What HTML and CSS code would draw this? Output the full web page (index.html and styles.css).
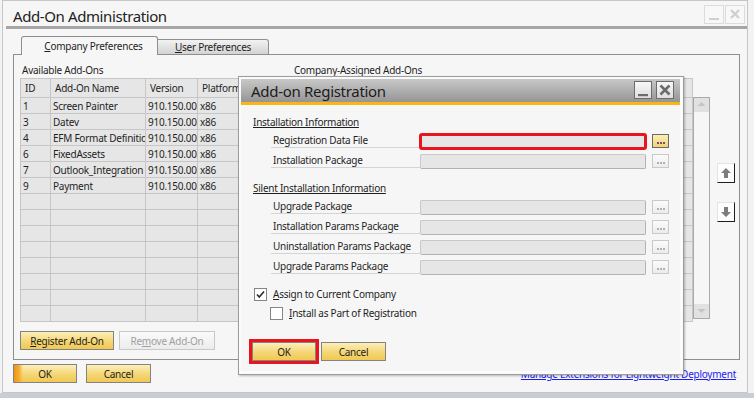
FILE: index.html
```html
<!DOCTYPE html>
<html>
<head>
<title>Add-On Administration</title>
<meta charset="UTF-8">
<link rel="stylesheet" href="styles.css">
</head>
<body>

<div class="win">
  <div class="titlebar">
    <span class="title">Add-On Administration</span>
    <span class="wbtns">
      <span class="wbtn"><svg width="18" height="17" viewBox="0 0 18 17"><rect x="4" y="12" width="10" height="2" fill="#cfcfcf"/></svg></span>
      <span class="wbtn"><svg width="18" height="17" viewBox="0 0 18 17"><path d="M5 4 L13 12 M13 4 L5 12" stroke="#cfcfcf" stroke-width="2.4"/></svg></span>
    </span>
  </div>

  <div class="content">
    <div class="tabs">
      <div class="tab active"><u>C</u>ompany Preferences</div>
      <div class="tab"><u>U</u>ser Preferences</div>
    </div>

    <div class="panel">
      <div class="lists">
        <div class="list avail">
          <div class="caption">Available Add-Ons</div>
          <table class="grid">
            <colgroup><col style="width:30px"><col style="width:95px"><col style="width:52px"><col></colgroup>
            <thead><tr><th>ID</th><th>Add-On Name</th><th>Version</th><th>Platform</th></tr></thead>
            <tbody>
              <tr><td>1</td><td>Screen Painter</td><td>910.150.00.</td><td>x86</td></tr>
              <tr><td>3</td><td>Datev</td><td>910.150.00.</td><td>x86</td></tr>
              <tr><td>4</td><td>EFM Format Definition</td><td>910.150.00.</td><td>x86</td></tr>
              <tr><td>6</td><td>FixedAssets</td><td>910.150.00.</td><td>x86</td></tr>
              <tr><td>7</td><td>Outlook_Integration</td><td>910.150.00.</td><td>x86</td></tr>
              <tr><td>9</td><td>Payment</td><td>910.150.00.</td><td>x86</td></tr>
              <tr><td></td><td></td><td></td><td></td></tr>
              <tr><td></td><td></td><td></td><td></td></tr>
              <tr><td></td><td></td><td></td><td></td></tr>
              <tr><td></td><td></td><td></td><td></td></tr>
              <tr><td></td><td></td><td></td><td></td></tr>
              <tr><td></td><td></td><td></td><td></td></tr>
              <tr><td></td><td></td><td></td><td></td></tr>
              <tr><td></td><td></td><td></td><td></td></tr>
            </tbody>
          </table>
        </div>

        <div class="list assigned">
          <div class="caption">Company-Assigned Add-Ons</div>
          <div class="gridbox">
            <table class="grid">
              <colgroup><col style="width:30px"><col style="width:150px"><col style="width:90px"><col style="width:60px"><col style="width:61px"><col style="width:9px"></colgroup>
              <thead><tr><th></th><th></th><th></th><th></th><th></th><th></th></tr></thead>
              <tbody>
                <tr><td></td><td></td><td></td><td></td><td></td><td></td></tr>
                <tr><td></td><td></td><td></td><td></td><td></td><td></td></tr>
                <tr><td></td><td></td><td></td><td></td><td></td><td></td></tr>
                <tr><td></td><td></td><td></td><td></td><td></td><td></td></tr>
                <tr><td></td><td></td><td></td><td></td><td></td><td></td></tr>
                <tr><td></td><td></td><td></td><td></td><td></td><td></td></tr>
                <tr><td></td><td></td><td></td><td></td><td></td><td></td></tr>
                <tr><td></td><td></td><td></td><td></td><td></td><td></td></tr>
                <tr><td></td><td></td><td></td><td></td><td></td><td></td></tr>
                <tr><td></td><td></td><td></td><td></td><td></td><td></td></tr>
                <tr><td></td><td></td><td></td><td></td><td></td><td></td></tr>
                <tr><td></td><td></td><td></td><td></td><td></td><td></td></tr>
                <tr><td></td><td></td><td></td><td></td><td></td><td></td></tr>
                <tr><td></td><td></td><td></td><td></td><td></td><td></td></tr>
              </tbody>
            </table>
            <div class="scrollcol">
              <div class="vscroll">
                <span class="sarrow"><svg width="15" height="13" viewBox="0 0 15 13"><path d="M3.5 8 L7.5 4 L11.5 8 Z" fill="#c4c4c4"/></svg></span>
                <span class="sarrow"><svg width="15" height="13" viewBox="0 0 15 13"><path d="M3.5 5 L7.5 9 L11.5 5 Z" fill="#c4c4c4"/></svg></span>
              </div>
            </div>
          </div>
        </div>

        <div class="movers">
          <button class="mover"><svg width="12" height="12" viewBox="0 0 12 12"><path d="M6 1 L11 6 L8 6 L8 11 L4 11 L4 6 L1 6 Z" fill="#7c7c7c"/></svg></button>
          <button class="mover"><svg width="12" height="12" viewBox="0 0 12 12"><path d="M6 11 L11 6 L8 6 L8 1 L4 1 L4 6 L1 6 Z" fill="#7c7c7c"/></svg></button>
        </div>
      </div>

      <div class="panel-btns">
        <button class="btn register"><u>R</u>egister Add-On</button>
        <button class="btn off remove">Re<u>m</u>ove Add-On</button>
      </div>
    </div>

    <div class="footer">
      <button class="btn focused">OK</button>
      <button class="btn cancel">Cancel</button>
      <a class="link" href="#">Manage Extensions for Lightweight Deployment</a>
    </div>
  </div>
</div>

<div class="dialog">
  <div class="dlg-title">
    <span class="dlg-caption">Add-on Registration</span>
    <span class="dlg-btns">
      <span class="dbtn"><svg width="16" height="16" viewBox="0 0 16 16"><rect x="3" y="12" width="10" height="2.2" fill="#6c6c6c"/></svg></span>
      <span class="dbtn"><svg width="16" height="16" viewBox="0 0 16 16"><path d="M3.5 3.5 L12.5 12.5 M12.5 3.5 L3.5 12.5" stroke="#6c6c6c" stroke-width="2.6"/></svg></span>
    </span>
  </div>

  <div class="dlg-body">
    <div class="section">Installation Information</div>
    <div class="row">
      <span class="label">Registration Data File</span>
      <span class="field marked"></span>
      <span class="browse hot"><i></i></span>
    </div>
    <div class="row">
      <span class="label">Installation Package</span>
      <span class="field"></span>
      <span class="browse"><i></i></span>
    </div>

    <div class="section silent">Silent Installation Information</div>
    <div class="row">
      <span class="label">Upgrade Package</span>
      <span class="field"></span>
      <span class="browse"><i></i></span>
    </div>
    <div class="row">
      <span class="label">Installation Params Package</span>
      <span class="field"></span>
      <span class="browse"><i></i></span>
    </div>
    <div class="row">
      <span class="label">Uninstallation Params Package</span>
      <span class="field"></span>
      <span class="browse"><i></i></span>
    </div>
    <div class="row">
      <span class="label">Upgrade Params Package</span>
      <span class="field"></span>
      <span class="browse"><i></i></span>
    </div>

    <div class="check first">
      <span class="box"><svg width="11" height="11" viewBox="0 0 11 11"><path d="M2 5.5 L4.3 8 L9 2.5" fill="none" stroke="#2a2a2a" stroke-width="1.6"/></svg></span>
      <span><u>A</u>ssign to Current Company</span>
    </div>
    <div class="check second">
      <span class="box"></span>
      <span><u>I</u>nstall as Part of Registration</span>
    </div>

    <div class="dlg-actions">
      <button class="btn marked-btn">OK</button>
      <button class="btn cancel">Cancel</button>
    </div>
  </div>
</div>

</body>
</html>
```

FILE: styles.css
```css
* {
  box-sizing: border-box;
}
html, body {
  margin: 0;
}
body {
  width: 754px;
  height: 398px;
  overflow: hidden;
  position: relative;
  background: linear-gradient(#f3f3f3 393px, #c9cdd6 393px);
  font-family: "Noto Sans", "Open Sans", sans-serif;
  font-size: 10px;
  letter-spacing: -0.25px;
  color: #1e1e1e;
}
u {
  text-decoration: underline;
  text-underline-offset: 1px;
}

/* main window */
.win {
  margin-left: 2px;
  width: 746px;
  height: 393px;
  background: #f6f6f6;
  border: 1px solid #c6c6c6;
  display: flex;
  flex-direction: column;
}
.titlebar {
  height: 28px;
  margin-left: 3px;
  border-bottom: 3px solid #a6a6a6;
  display: flex;
  align-items: flex-start;
  padding-left: 7px;
}
.title {
  font-size: 15px;
  letter-spacing: -0.4px;
  line-height: 20px;
  margin-top: 5px;
  color: #222;
}
.wbtns {
  margin-left: auto;
  margin-top: 4px;
  margin-right: 2px;
  display: flex;
  gap: 1px;
}
.wbtn {
  width: 20px;
  height: 19px;
  border: 1px solid #dcdcdc;
  background: #f8f8f8;
  display: flex;
}

.content {
  padding: 7px 7px 0 10px;
}

/* tabs */
.tabs {
  display: flex;
  align-items: flex-end;
  margin-left: 8px;
  height: 19px;
  margin-bottom: -1px;
  position: relative;
}
.tab {
  height: 16px;
  width: 111px;
  border: 1px solid #8e8e8e;
  border-left: 0;
  border-radius: 0 3px 0 0;
  background: linear-gradient(#f2f2f2, #d3d3d3);
  text-align: center;
  line-height: 14px;
}
.tab.active {
  height: 19px;
  width: 137px;
  border-left: 1px solid #8e8e8e;
  border-bottom: 0;
  border-radius: 3px 3px 0 0;
  background: #f6f6f6;
  line-height: 18px;
  padding-left: 8px;
}

.panel {
  height: 306px;
  border: 1px solid #8e8e8e;
  background: #f6f6f6;
}
.lists {
  display: flex;
  padding: 8px 0 0 6px;
}
.caption {
  height: 15px;
  line-height: 15px;
  padding-left: 2px;
}
.avail {
  width: 266px;
}
.assigned {
  margin-left: 6px;
}

/* grids */
.grid {
  border-collapse: separate;
  border-spacing: 0;
  table-layout: fixed;
  border-top: 1px solid #c6c6c6;
  border-left: 1px solid #c6c6c6;
  background: #e6e6e6;
}
.avail .grid {
  width: 266px;
}
.assigned .grid {
  width: 401px;
}
.grid th, .grid td {
  border-right: 1px solid #c6c6c6;
  border-bottom: 1px solid #c6c6c6;
  padding: 0 0 0 2px;
  overflow: hidden;
  white-space: nowrap;
  text-align: left;
  font-weight: normal;
}
.grid th {
  padding-left: 4px;
}
.grid thead tr {
  height: 19px;
}
.grid tbody tr {
  height: 16px;
}
.gridbox {
  display: flex;
}
.scrollcol {
  padding-top: 19px;
}
.vscroll {
  width: 17px;
  height: 222px;
  border: 1px solid #a9a9a9;
  background: #f6f6f6;
  display: flex;
  flex-direction: column;
  justify-content: space-between;
}
.sarrow {
  display: flex;
  height: 14px;
  background: #e1e1e1;
}

.movers {
  margin-left: 7px;
  padding-top: 100px;
  display: flex;
  flex-direction: column;
  gap: 19px;
}
.mover {
  width: 18px;
  height: 20px;
  padding: 0;
  background: #fdfdfd;
  border: 1px solid;
  border-color: #e4e4e4 #1e1e1e #1e1e1e #e4e4e4;
  display: flex;
  align-items: center;
  justify-content: center;
}

/* buttons */
.btn {
  height: 19px;
  width: 64px;
  padding: 0;
  font: inherit;
  letter-spacing: inherit;
  color: #1e1e1e;
  border: 1px solid #838383;
  background: linear-gradient(#fcefbc, #f5d675 55%, #f0c952);
}
.btn.cancel {
  width: 65px;
}
.btn.focused {
  background: linear-gradient(90deg, #ee9512, #f4ad33 5px, rgba(244, 200, 90, 0) 9px),
              linear-gradient(#fcefbc, #f5d675 55%, #f0c952);
}
.btn.off {
  color: #a0a0a0;
  border-color: #c8c8c8;
  background: linear-gradient(#fafafa, #ececec);
}
.panel-btns {
  display: flex;
  gap: 5px;
  padding: 9px 0 0 6px;
}
.register {
  width: 94px;
}
.remove {
  width: 96px;
}

.footer {
  display: flex;
  align-items: flex-start;
  gap: 9px;
  margin-top: 4px;
}
.link {
  margin: 3px 4px 0 auto;
  color: #1b1bf5;
  line-height: 14px;
}

/* registration dialog */
.dialog {
  position: absolute;
  left: 238px;
  top: 76px;
  width: 446px;
  height: 299px;
  border: 1px solid #9c9c9c;
  background: #fbfbfb;
  padding: 2px 3px 3px 2px;
  box-shadow: 1px 1px 2px rgba(0, 0, 0, .25);
  display: flex;
  flex-direction: column;
}
.dlg-title {
  height: 26px;
  border-bottom: 3px solid #f8b617;
  background: linear-gradient(#c8c8c8, #959595);
  display: flex;
  align-items: flex-start;
  padding-left: 10px;
}
.dlg-caption {
  font-size: 15px;
  letter-spacing: -0.3px;
  line-height: 20px;
  margin-top: 2px;
  color: #1c1c1c;
}
.dlg-btns {
  margin-left: auto;
  margin-right: 6px;
  margin-top: 2px;
  display: flex;
  gap: 4px;
}
.dbtn {
  width: 18px;
  height: 18px;
  border: 1px solid #6c6c6c;
  background: linear-gradient(#f7f7f7, #dedede);
  display: flex;
}
.dlg-body {
  flex: 1;
  background: #f6f6f6;
  padding-left: 12px;
}
.section {
  margin-top: 10px;
  height: 14px;
  line-height: 14px;
  text-decoration: underline;
  text-underline-offset: 1px;
}
.section.silent {
  margin-top: 12px;
}
.row {
  display: flex;
  align-items: flex-start;
  margin-top: 5px;
  height: 15px;
}
.label {
  margin-left: 18px;
  width: 149px;
  height: 14px;
  line-height: 13px;
  padding-left: 2px;
  border-bottom: 1px solid #d4d4d4;
}
.field {
  width: 226px;
  height: 15px;
  background: #e6e6e6;
  border: 1px solid #c9c9c9;
  border-right-color: #b2b2b2;
  border-bottom-color: #b2b2b2;
  border-radius: 2px;
}
.field.marked {
  outline: 3px solid #e8141e;
  outline-offset: -2px;
}
.browse {
  margin-left: 6px;
  width: 17px;
  height: 14px;
  border: 1px solid #c9c9c9;
  background: linear-gradient(#fbfbfb, #ececec);
  display: flex;
  justify-content: center;
  padding-top: 7px;
}
.browse i {
  width: 8px;
  height: 2px;
  background: repeating-linear-gradient(90deg, #d4a4a0 0 1px, #a4b0d8 1px 2px, transparent 2px 3px);
}
.browse.hot {
  border-color: #6a6a6a;
  background: linear-gradient(#fbefb8, #f2d170);
}
.browse.hot i {
  background: repeating-linear-gradient(90deg, #b03c30 0 1px, #405cb0 1px 2px, transparent 2px 3px);
}

.check {
  display: flex;
  align-items: center;
  gap: 6px;
  height: 13px;
  line-height: 13px;
}
.check.first {
  margin-top: 13px;
  margin-left: 1px;
}
.check.second {
  margin-top: 6px;
  margin-left: 17px;
}
.box {
  width: 13px;
  height: 13px;
  border: 1px solid #868686;
  background: #fff;
  display: flex;
}
.dlg-actions {
  display: flex;
  gap: 5px;
  margin-top: 22px;
  margin-left: -1px;
}
.marked-btn {
  outline: 3px solid #e8141e;
  outline-offset: 0;
}
```
